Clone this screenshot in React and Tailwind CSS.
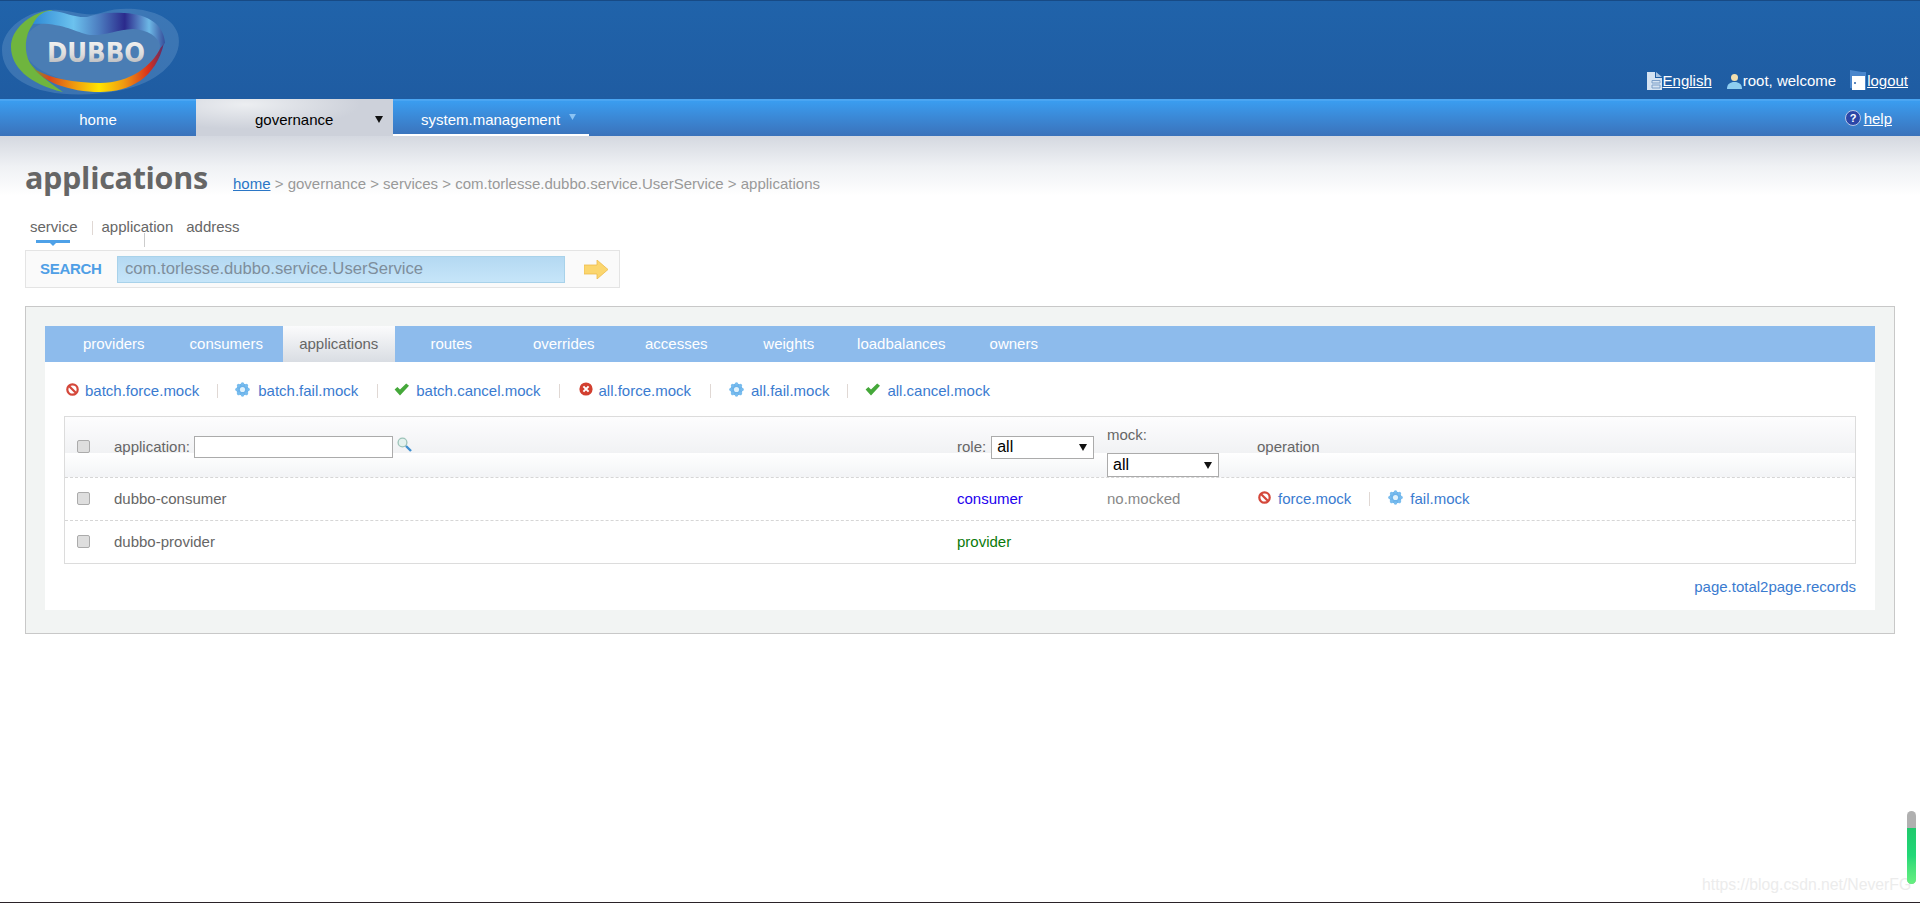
const font = { fontFamily: '"Liberation Sans", Arial, sans-serif' };

const tabs = ['providers', 'consumers', 'applications', 'routes', 'overrides', 'accesses', 'weights', 'loadbalances', 'owners'];

function DubboLogo() {
  return (
    <svg viewBox="0 1 180 98" className="w-[180px] h-[98px] shrink-0">
      <defs>
        <linearGradient id="rainbow" x1="30" y1="0" x2="168" y2="0" gradientUnits="userSpaceOnUse">
          <stop offset="0" stopColor="#5fae3c" />
          <stop offset="0.14" stopColor="#d8481c" />
          <stop offset="0.32" stopColor="#f09a10" />
          <stop offset="0.5" stopColor="#ffe400" />
          <stop offset="0.68" stopColor="#f09a10" />
          <stop offset="0.86" stopColor="#d9301c" />
          <stop offset="1" stopColor="#3a2a80" />
        </linearGradient>
        <linearGradient id="ribbon" x1="33" y1="0" x2="168" y2="0" gradientUnits="userSpaceOnUse">
          <stop offset="0" stopColor="#2f8bd6" />
          <stop offset="0.3" stopColor="#6cc2ee" />
          <stop offset="0.5" stopColor="#4a78bd" />
          <stop offset="0.68" stopColor="#2b2a8c" />
          <stop offset="0.86" stopColor="#6db8e6" />
          <stop offset="1" stopColor="#2b3a8c" />
        </linearGradient>
        <linearGradient id="silver" x1="0" y1="0" x2="0" y2="1">
          <stop offset="0" stopColor="#f6f6f6" />
          <stop offset="0.55" stopColor="#dcdcdc" />
          <stop offset="1" stopColor="#a9abb0" />
        </linearGradient>
      </defs>
      <path d="M2 50C2 28 30 8 58 10C76 11 88 18 104 12C124 5 170 8 178 34C184 58 160 82 122 90C88 97 46 97 22 82C8 74 2 62 2 50Z" fill="#7fa8d4" opacity="0.3" />
      <path d="M24 44C26 26 50 16 74 22C92 28 108 30 124 24C142 20 160 30 160 46C158 66 134 82 104 84C72 86 22 72 24 44Z" fill="#4a7db4" />
      <path d="M50 10C28 14 11 30 11 47C11 66 28 84 63 92C48 82 36 72 30 63C24 52 24 36 33 24C38 17 45 13 53 11Z" fill="#6fb53e" />
      <path d="M30 63C40 82 70 92 100 92C130 92 156 78 164 43L161 47C152 66 130 83 100 83C74 83 50 78 36 70Z" fill="url(#rainbow)" />
      <path d="M33 24C38 14 46 10 53 11C64 12 76 18 87 17C98 13 110 12 124 13C150 14 164 26 165 43L161 47C158 36 148 30 133 29C116 30 104 36 90 35C74 32 62 22 33 24Z" fill="url(#ribbon)" />
      <text
        x="47"
        y="62"
        textLength="98"
        lengthAdjust="spacingAndGlyphs"
        fontSize="26"
        fontWeight="700"
        fill="url(#silver)"
        style={{ fontFamily: '"DejaVu Sans", sans-serif' }}
      >
        DUBBO
      </text>
    </svg>
  );
}

function BanIcon() {
  return (
    <svg viewBox="0 0 14 14" className="w-[13px] h-[13px] shrink-0">
      <circle cx="7" cy="7" r="5.6" fill="none" stroke="#d4473a" strokeWidth="2.4" />
      <path d="M3.2 3.2L10.8 10.8" stroke="#d4473a" strokeWidth="2.4" />
    </svg>
  );
}

function GearIcon() {
  return (
    <svg viewBox="0 0 14 14" className="w-[15px] h-[15px] shrink-0">
      <circle cx="7" cy="7" r="5.6" fill="#6ab2ea" />
      {[0, 45, 90, 135, 180, 225, 270, 315].map((a) => (
        <circle key={a} cx="7" cy="1.8" r="1.6" fill="#78bcee" transform={`rotate(${a} 7 7)`} />
      ))}
      <circle cx="7" cy="7" r="2.4" fill="#dff1fc" />
    </svg>
  );
}

function CheckIcon() {
  return (
    <svg viewBox="0 0 15 13" className="w-[15px] h-[13px] shrink-0">
      <path d="M0.6 6.6L3.4 4L6 6.6L12.2 0.4L15 2.8L6 12.6Z" fill="#45a83a" />
    </svg>
  );
}

function CrossIcon() {
  return (
    <svg viewBox="0 0 14 14" className="w-[14px] h-[14px] shrink-0">
      <circle cx="7" cy="7" r="6.6" fill="#d23f2f" />
      <path d="M4.4 4.4L9.6 9.6M9.6 4.4L4.4 9.6" stroke="#fff" strokeWidth="2" />
    </svg>
  );
}

function Sep({ className }) {
  return <span className={`w-px h-[14px] bg-[#e0d8d4] shrink-0 ${className}`} />;
}

function MockLink({ icon, label, iconClass }) {
  return (
    <span className="flex items-center">
      <span className={`flex -translate-y-[2px] ${iconClass}`}>{icon}</span>
      <a className="text-[#3a7bd0]">{label}</a>
    </span>
  );
}

function Checkbox() {
  return <input type="checkbox" className="appearance-none w-[13px] h-[13px] rounded-[2px] bg-[#dedede] border border-[#ababab] block" />;
}

function FakeSelect({ className }) {
  return (
    <div className={`border border-[#ababab] bg-white flex items-center justify-between pl-[5px] pr-[6px] text-black text-[16px] ${className}`}>
      <span>all</span>
      <svg viewBox="0 0 8 7" className="w-[8px] h-[7px]"><path d="M0 0H8L4 7Z" fill="#111" /></svg>
    </div>
  );
}

export default function App() {
  return (
    <div style={font} className="relative h-[903px] overflow-hidden bg-white text-[15px] text-[#666] border-b border-[#2a2228]">
      <header className="h-[99px] border-t border-[#174a85] bg-linear-to-b from-[#2063aa] to-[#1f5ca2] flex items-end justify-between">
        <DubboLogo />
        <div className="flex items-center h-[18px] mb-[9px] pr-[12px] text-white leading-[18px]">
          <svg viewBox="0 0 15 18" className="w-[15px] h-[18px] mr-[1px]">
            <path d="M0 0H8V6H15V18H0Z" fill="#d5e3f2" />
            <path d="M9 0L15 5H9Z" fill="#a9c4e2" />
            <path d="M5 8.5H13V11H5ZM5 13H13V16H5Z" fill="none" stroke="#7d9fc8" strokeWidth="1" />
          </svg>
          <a className="underline">English</a>
          <svg viewBox="0 0 15 16" className="w-[15px] h-[16px] ml-[15px] mr-[1px]">
            <circle cx="7.5" cy="4.5" r="3.5" fill="#f2dfae" />
            <path d="M0 16C0 11 3 9 7.5 9C12 9 15 11 15 16Z" fill="#8ecdf0" />
          </svg>
          <span>root, welcome</span>
          <svg viewBox="0 0 16 22" className="w-[16px] h-[22px] ml-[14px] mr-[1px]">
            <path d="M0 0L12 2H16V20H10L0 18Z" fill="#4a86cc" />
            <path d="M2 6H15V20H2Z" fill="#fff" />
            <circle cx="5" cy="13" r="1" fill="#2a62a8" />
          </svg>
          <a className="underline">logout</a>
        </div>
      </header>

      <nav className="h-[37px] flex border-t-2 border-[#4aa5f2] bg-linear-to-b from-[#3a9df0] to-[#3a72ba] text-white leading-[37px]">
        <a className="w-[196px] text-center">home</a>
        <div className="-mt-[2px] w-[197px] h-[37px] relative flex items-center pl-[59px] pt-[5px] text-black bg-[radial-gradient(ellipse_at_25%_15%,#eceef1,#cdd1da_55%)]">
          <span className="leading-[20px]">governance</span>
          <svg viewBox="0 0 8 7" className="absolute left-[179px] top-[17px] w-[8px] h-[7px]"><path d="M0 0H8L4 7Z" fill="#111" /></svg>
        </div>
        <div className="w-[196px] h-[35px] border-b-2 border-white pl-[28px] pt-[4px] flex items-center gap-[9px]">
          <span className="leading-[20px]">system.management</span>
          <svg viewBox="0 0 8 7" className="w-[7px] h-[6px] -mt-[5px]"><path d="M0 0H8L4 7Z" fill="#8cc4f4" /></svg>
        </div>
        <div className="ml-auto pr-[28px] flex items-center h-[36px] gap-[3px]">
          <svg viewBox="0 0 16 16" className="w-[16px] h-[16px] -mt-[2px]">
            <circle cx="8" cy="8" r="7.5" fill="#2b46a8" stroke="#b8c6e6" />
            <text x="8" y="12" textAnchor="middle" fontSize="11" fontWeight="700" fill="#fff" style={font}>?</text>
          </svg>
          <a className="underline leading-[20px]">help</a>
        </div>
      </nav>

      <main className="bg-[linear-gradient(to_bottom,#d4d8e0,#eff1f4_30px,#ffffff_60px)] bg-no-repeat">
        <div className="h-[81px] pl-[25px] pt-[21px] flex items-baseline">
          <h1 className="w-[183px] text-[30.5px] leading-[40px] font-bold tracking-[-0.3px] whitespace-nowrap" style={{ fontFamily: '"Open Sans", sans-serif' }}>applications</h1>
          <p className="ml-[25px] text-[#999]">
            <a className="text-[#2a76c6] underline">home</a> &gt; governance &gt; services &gt; com.torlesse.dubbo.service.UserService &gt; applications
          </p>
        </div>

        <div className="h-[33px] pl-[30px] flex items-start leading-[20px]">
          <span className="relative">
            service
            <span className="absolute left-[6px] top-[23px] w-[34px] h-[3px] bg-[#4ea1e8]" />
            <span className="absolute left-[20px] top-[26px] border-x-[3px] border-t-[3px] border-x-transparent border-t-[#4ea1e8]" />
          </span>
          <Sep className="ml-[14px] mt-[4px] bg-[#ccc]" />
          <span className="relative ml-[9px]">
            application
            <span className="absolute left-[42px] top-[16px] w-px h-[14px] bg-[#ccc]" />
          </span>
          <span className="ml-[13px]">address</span>
        </div>

        <div className="ml-[25px] w-[595px] h-[38px] border border-[#e4e4e4] bg-[#fafafa] flex items-center">
          <span className="ml-[14px] w-[77px] text-[15px] font-bold text-[#4f9fe6] tracking-[-0.3px]">SEARCH</span>
          <input
            readOnly
            defaultValue="com.torlesse.dubbo.service.UserService"
            className="w-[448px] h-[27px] pl-[7px] text-[16.66px] text-[#7e8e9c] bg-linear-to-b from-[#b4d9f2] to-[#c6e5f9] border border-[#a8d2ea] outline-none"
          />
          <svg viewBox="0 0 24 19" className="ml-[19px] w-[24px] h-[19px]">
            <path d="M0 5H13V0L24 9.5L13 19V14H0Z" fill="#fbd66e" stroke="#edbb4c" strokeWidth="0.8" />
          </svg>
        </div>

        <section className="mt-[18px] mx-[25px] h-[328px] border border-[#c8c8c8] bg-[#f2f4f3] pt-[19px] px-[19px]">
          <div className="h-[36px] bg-[#8dbbec] pl-[12.5px] flex text-white">
            {tabs.map((t) => (
              <a
                key={t}
                className={
                  t === 'applications'
                    ? 'w-[112.5px] flex items-center justify-center text-[#666] bg-linear-to-b from-[#fbfbfc] to-[#d9dde3]'
                    : 'w-[112.5px] flex items-center justify-center'
                }
              >
                {t}
              </a>
            ))}
          </div>

          <div className="h-[248px] bg-white px-[19px]">
            <div className="h-[54px] pt-[4px] pl-[2px] flex items-center">
              <MockLink icon={<BanIcon />} label="batch.force.mock" iconClass="mr-[6px]" />
              <Sep className="ml-[18px] mr-[17px]" />
              <MockLink icon={<GearIcon />} label="batch.fail.mock" iconClass="mr-[8px]" />
              <Sep className="ml-[19px] mr-[16px]" />
              <MockLink icon={<CheckIcon />} label="batch.cancel.mock" iconClass="mr-[7px]" />
              <Sep className="ml-[18px] mr-[19px]" />
              <MockLink icon={<CrossIcon />} label="all.force.mock" iconClass="mr-[6px]" />
              <Sep className="ml-[19px] mr-[18px]" />
              <MockLink icon={<GearIcon />} label="all.fail.mock" iconClass="mr-[7px]" />
              <Sep className="ml-[18px] mr-[17px]" />
              <MockLink icon={<CheckIcon />} label="all.cancel.mock" iconClass="mr-[7px]" />
            </div>

            <div className="h-[148px] border border-[#dcdcdc]">
              <div className="h-[61px] border-b border-dashed border-[#d6d6d6] grid grid-cols-[49px_843px_150px_150px_1fr] items-center bg-[linear-gradient(to_bottom,#fdfdfe,#f1f2f4_60%,#ffffff_60%,#f3f4f6)]">
                <div className="pl-[12px] -mt-[2px]"><Checkbox /></div>
                <div className="flex items-center">
                  <span>application:</span>
                  <input readOnly className="ml-[4px] w-[199px] h-[22px] bg-white border border-[#ababab] outline-none" />
                  <svg viewBox="0 0 15 15" className="ml-[4px] -mt-[6px] w-[15px] h-[15px]">
                    <circle cx="5.5" cy="5.5" r="4.4" fill="#e4f2ee" stroke="#9cc3b8" strokeWidth="1.3" />
                    <path d="M9 9L14 14" stroke="#3f8fd0" strokeWidth="2.4" />
                  </svg>
                </div>
                <div className="flex items-center">
                  <span>role:</span>
                  <FakeSelect className="ml-[5px] w-[103px] h-[23px]" />
                </div>
                <div className="self-start pt-[9px]">
                  <div className="h-[18px] leading-[18px]">mock:</div>
                  <FakeSelect className="mt-[9px] w-[112px] h-[24px]" />
                </div>
                <div>operation</div>
              </div>

              <div className="h-[43px] border-b border-dashed border-[#d6d6d6] grid grid-cols-[49px_843px_150px_150px_1fr] items-center">
                <div className="pl-[12px] -mt-[1px]"><Checkbox /></div>
                <div>dubbo-consumer</div>
                <div className="text-[#2200ee]">consumer</div>
                <div className="text-[#888]">no.mocked</div>
                <div className="flex items-center">
                  <MockLink icon={<BanIcon />} label="force.mock" iconClass="mr-[7px] ml-[1px]" />
                  <Sep className="ml-[18px] mr-[18px]" />
                  <MockLink icon={<GearIcon />} label="fail.mock" iconClass="mr-[7px]" />
                </div>
              </div>

              <div className="h-[42px] grid grid-cols-[49px_843px_150px_150px_1fr] items-center">
                <div className="pl-[12px] -mt-[1px]"><Checkbox /></div>
                <div>dubbo-provider</div>
                <div className="text-[#0a7a0a]">provider</div>
              </div>
            </div>

            <div className="h-[46px] flex items-center justify-end">
              <a className="text-[#3a7bd0]">page.total2page.records</a>
            </div>
          </div>
        </section>
      </main>

      {/* watermark and floating widget that sit on top of the page */}
      <span className="absolute left-[1702px] top-[875px] text-[15.75px] leading-[20px] text-[#ececec] whitespace-nowrap">https://blog.csdn.net/NeverFG</span>
      <div className="absolute left-[1907px] top-[811px] w-[9px] h-[73px] rounded-full overflow-hidden bg-[#b0b0b0] flex flex-col justify-end">
        <div className="h-[56px] bg-linear-to-b from-[#1fc96c] via-[#22d877] to-[#66f080]" />
      </div>
    </div>
  );
}
